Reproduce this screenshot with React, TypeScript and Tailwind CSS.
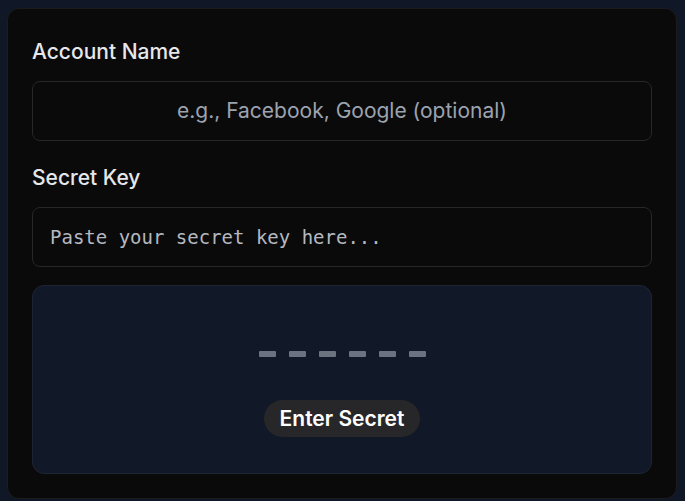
import React from "react";

export default function App() {
  return (
    <div className="min-h-[501px] w-full bg-[#101727] pl-[7px] pr-[8px] pt-[8px] pb-[2px]" style={{ fontFamily: "Inter, 'Noto Sans', sans-serif" }}>
      <div className="rounded-xl border border-[#1c1c1f] bg-[#0a0a0a] px-6 pt-[29px] pb-6">
        <label className="block text-[21px] font-medium leading-[28px] text-[#e5e7eb]">Account Name</label>
        <div className="mt-[15px] flex h-[60px] items-center justify-center rounded-lg border border-[#27272a] bg-[#0a0a0a] text-[21px] text-[#9ca3af]">
          e.g., Facebook, Google (optional)
        </div>
        <label className="mt-[23px] block text-[21px] font-medium leading-[28px] text-[#e5e7eb]">Secret Key</label>
        <div
          className="mt-[15px] flex h-[60px] items-center rounded-lg border border-[#27272a] bg-[#0a0a0a] px-[17px] text-[19px] text-[#b4b8c0]"
          style={{ fontFamily: "'DejaVu Sans Mono', monospace" }}
        >
          Paste your secret key here...
        </div>
        <div className="mt-[18px] flex h-[189px] flex-col items-center rounded-xl border border-[#1f2433] bg-[#111827] pt-[65px]">
          <div className="flex gap-[13px]">
            {[0, 1, 2, 3, 4, 5].map((i) => (
              <div key={i} className="h-[6px] w-[17px] rounded-[1px] bg-[#6b7280]" />
            ))}
          </div>
          <div className="mt-[43px] rounded-full bg-[#27272a] px-4 py-[5px] text-[21px] font-semibold leading-[27px] text-white">
            Enter Secret
          </div>
        </div>
      </div>
    </div>
  );
}
